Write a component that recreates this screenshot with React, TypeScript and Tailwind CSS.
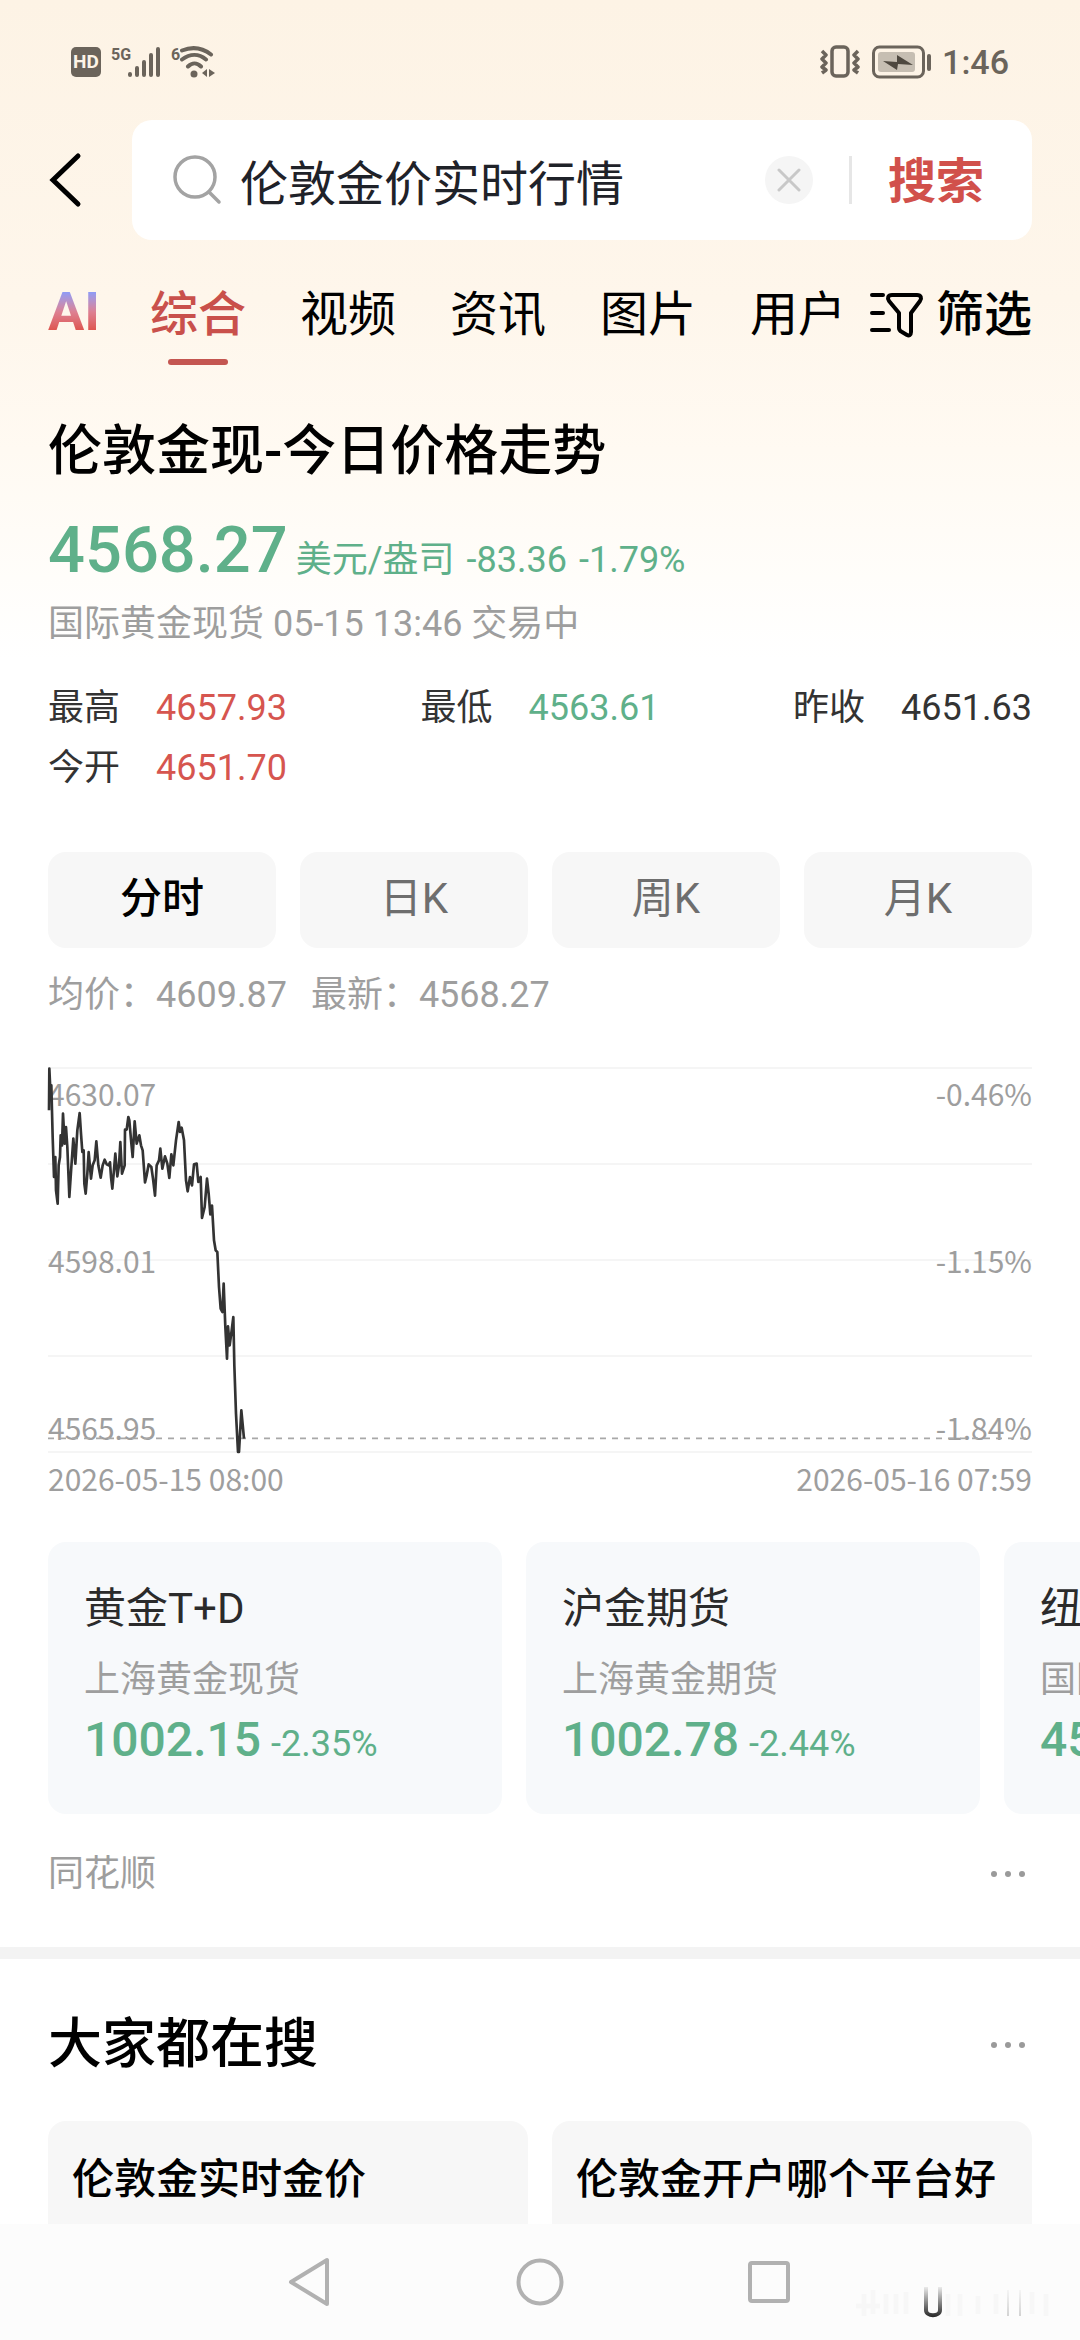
import { useState } from 'react';

const TABS = ['综合', '视频', '资讯', '图片', '用户'];
const PERIODS = ['分时', '日K', '周K', '月K'];

const STATS = [
  { label: '最高', value: '4657.93', color: 'text-[#d6554f]' },
  { label: '最低', value: '4563.61', color: 'text-[#5fb08a]' },
  { label: '昨收', value: '4651.63', color: 'text-[#333333]' },
  { label: '今开', value: '4651.70', color: 'text-[#d6554f]' },
];

const MARKETS = [
  { name: '黄金T+D', source: '上海黄金现货', price: '1002.15', change: '-2.35%' },
  { name: '沪金期货', source: '上海黄金期货', price: '1002.78', change: '-2.44%' },
  { name: '纽约', source: '国际', price: '45', change: '' },
];

const RELATED = ['伦敦金实时金价', '伦敦金开户哪个平台好'];

const CHART_LABELS = [
  ['4630.07', '-0.46%'],
  ['4598.01', '-1.15%'],
  ['4565.95', '-1.84%'],
];

const PRICE_LINE =
  '57,180 58,55 62,140 64,105 68,260 72,380 76,320 78,420 83,460 86,345 90,320 92,255 96,285 99,190 104,280 108,230 112,290 118,440 124,350 130,265 136,340 142,240 149,188 153,250 157,305 161,300 163,400 167,430 172,370 176,305 183,385 188,345 194,330 199,273 205,345 212,382 218,345 224,328 230,342 236,345 240,336 243,380 247,415 251,370 256,310 262,378 267,345 271,275 276,370 284,345 285,238 290,238 295,200 298,210 303,268 308,320 314,213 320,280 328,255 333,285 338,300 345,396 350,375 356,342 364,350 369,385 375,436 380,345 387,330 391,295 397,355 405,318 412,340 418,383 424,312 430,345 438,270 446,215 450,245 455,232 462,270 465,330 468,390 473,423 480,380 486,405 492,342 500,340 505,395 512,380 516,503 524,470 531,385 536,430 541,492 546,466 552,570 557,600 562,605 567,710 572,775 577,785 581,700 586,830 591,925 594,828 599,885 605,840 610,800 613,945 618,1090 624,1205 627,1205 634,1080 642,1165';

function StatusBar() {
  return (
    <div className="flex h-[120px] items-center justify-between px-[71px] pt-[3px] text-[#6b645b]">
      <div className="flex items-center">
        <span className="flex h-[30px] w-[30px] items-center justify-center rounded-[5px] bg-[#6b645b] text-[19px] font-bold leading-none text-[#fdf4e7]">
          HD
        </span>
        <span className="ml-[10px] h-[32px] text-[16px] font-bold leading-[18px]">5G</span>
        <svg className="-ml-[4px]" width="34" height="32" viewBox="0 0 34 32" stroke="currentColor" strokeWidth="4" strokeLinecap="round">
          <path d="M3 28v1M10 22v7M17 16v13M24 9v20M31 3v26" />
        </svg>
        <span className="ml-[10px] h-[32px] text-[16px] font-bold leading-[18px]">6</span>
        <svg width="36" height="32" viewBox="0 0 36 32" fill="none" stroke="currentColor" strokeWidth="4">
          <path d="M2 4.500c10-4 20-3 29 4M2 13.500c8-6 17-6 24 0M8 20.500c4-4 9-4 13 0" strokeLinecap="round" />
          <circle cx="14" cy="28" r="3.500" fill="currentColor" stroke="none" />
          <path d="M27 23v8l-5-4zM29 23v8l6-4z" fill="currentColor" stroke="none" />
        </svg>
      </div>
      <div className="flex items-center">
        <svg width="40" height="34" viewBox="0 0 40 34" fill="none" stroke="currentColor" strokeWidth="3.500" strokeLinejoin="round">
          <rect x="12" y="2" width="16" height="29" rx="4" />
          <path d="M2 6l4 4-4 4 4 4-4 4 4 3-4 3M38 6l-4 4 4 4-4 4 4 4-4 3 4 3" />
        </svg>
        <svg className="ml-[12px]" width="60" height="34" viewBox="0 0 60 34" fill="none">
          <rect x="1.500" y="2" width="50" height="30" rx="6" stroke="currentColor" strokeWidth="3" />
          <rect x="6" y="7" width="37" height="20" rx="3" fill="#c6beb2" />
          <path d="M11 16l14 1v-7l16 10-15-1-1 6z" fill="#4e483f" />
          <rect x="55" y="9" width="4" height="17" rx="2" fill="currentColor" />
        </svg>
        <span className="ml-[10px] text-[34px] font-medium leading-[40px]">1:46</span>
      </div>
    </div>
  );
}

function SearchBar() {
  const [query, setQuery] = useState('伦敦金价实时行情');

  return (
    <div className="flex items-center px-12">
      <button type="button" aria-label="返回" className="w-[84px]">
        <svg width="36" height="56" viewBox="0 0 36 56" fill="none" stroke="#000" strokeWidth="5" strokeLinecap="round" strokeLinejoin="miter">
          <path d="M30 4L5 28l25 24" />
        </svg>
      </button>
      <form
        className="flex h-[120px] min-w-0 flex-1 items-center rounded-[20px] bg-white pl-[40px] pr-12"
        onSubmit={(e) => e.preventDefault()}
      >
        <svg className="shrink-0" width="52" height="52" viewBox="0 0 52 52" fill="none" stroke="#a3a3a3" strokeWidth="3.500">
          <circle cx="23" cy="23" r="20" />
          <path d="M37 38l10 10" strokeLinecap="round" />
        </svg>
        <input
          aria-label="搜索内容"
          value={query}
          onChange={(e) => setQuery(e.target.value)}
          className="ml-4 h-[74px] min-w-0 flex-1 bg-transparent text-[48px] text-[#1f2229] outline-none"
        />
        <button
          type="button"
          aria-label="清空"
          onClick={() => setQuery('')}
          className="flex h-12 w-12 shrink-0 items-center justify-center rounded-full bg-[#f5f5f5]"
        >
          <svg width="24" height="24" viewBox="0 0 24 24" stroke="#c8c8c8" strokeWidth="3" strokeLinecap="round">
            <path d="M2 2l20 20M22 2L2 22" />
          </svg>
        </button>
        <div className="ml-9 h-12 w-[3px] bg-[#e6e6e6]" />
        <button type="submit" className="ml-9 shrink-0 pt-1 text-[48px] font-bold leading-[72px] text-[#d1504b]">
          搜索
        </button>
      </form>
    </div>
  );
}

function TabBar() {
  const [active, setActive] = useState('综合');

  return (
    <nav className="flex items-start justify-between px-12 pt-[39px] text-[48px] leading-[72px] text-black">
      <div className="flex items-start gap-[54px]">
        <button
          type="button"
          className="w-12 bg-linear-to-b from-[#8f9bf5] from-20% via-[#dd8092] via-50% to-[#de5048] to-80% bg-clip-text text-left text-[54px] font-bold leading-[66px] text-transparent"
        >
          AI
        </button>
        {TABS.map((tab) => (
          <button key={tab} type="button" onClick={() => setActive(tab)} className="flex flex-col items-center">
            <span className={tab === active ? 'font-medium text-[#c9504b]' : ''}>{tab}</span>
            {tab === active && <span className="mt-2 h-[6px] w-[60px] rounded-full bg-[#c45651]" />}
          </button>
        ))}
      </div>
      <button type="button" className="flex shrink-0 items-center font-medium">
        <svg className="mr-3" width="56" height="48" viewBox="0 0 56 48" fill="none" stroke="#000" strokeWidth="4" strokeLinecap="round" strokeLinejoin="round">
          <path d="M4 4h11M4 22h11M4 39h17" />
          <path d="M24 4h25c4 0 5 3 3 6L43 22v19c0 3-2 4-4 3l-5-3c-2-1-3-2-3-4V22L21 10c-2-3-1-6 3-6z" />
        </svg>
        筛选
      </button>
    </nav>
  );
}

function PriceChart() {
  return (
    <div className="mt-[45px] font-['Noto_Sans_CJK_SC',sans-serif] text-[30px] leading-[44px] text-[#9e9e9e]">
      <div className="relative">
        <svg className="block h-[386px] w-full" viewBox="54 50 2952 1158" preserveAspectRatio="none" fill="none">
          <path d="M54 53H3006M54 341H3006M54 629H3006M54 917H3006M54 1205H3006" stroke="#f5f5f5" strokeWidth="6" />
        </svg>
        <div className="absolute inset-0 flex flex-col justify-between py-1">
          {CHART_LABELS.map(([price, change]) => (
            <div key={price} className="flex justify-between">
              <span>{price}</span>
              <span>{change}</span>
            </div>
          ))}
        </div>
        <svg className="absolute inset-0 h-full w-full overflow-visible" viewBox="54 50 2952 1158" preserveAspectRatio="none" fill="none">
          <path d="M54 1164H3006" stroke="#a8a8a8" strokeWidth="5" strokeDasharray="18 18" />
          <polyline points={PRICE_LINE} stroke="#333333" strokeWidth="8" strokeLinejoin="round" />
        </svg>
      </div>
      <div className="mt-[3px] flex justify-between">
        <span>2026-05-15 08:00</span>
        <span>2026-05-16 07:59</span>
      </div>
    </div>
  );
}

function MoreButton() {
  return (
    <button type="button" aria-label="更多" className="px-1">
      <svg width="40" height="12" viewBox="0 0 40 12" fill="#9a9a9a">
        <circle cx="6" cy="6" r="3" />
        <circle cx="20" cy="6" r="3" />
        <circle cx="34" cy="6" r="3" />
      </svg>
    </button>
  );
}

function QuoteCard() {
  const [period, setPeriod] = useState('分时');

  return (
    <section className="px-12">
      <h1 className="mt-[51px] text-[54px] font-medium leading-[72px] text-black">伦敦金现-今日价格走势</h1>
      <div className="mt-[22px] flex items-baseline gap-3 text-[36px] text-[#5fb08a]">
        <span className="-mr-1 text-[65px] font-medium leading-[80px]">4568.27</span>
        <span>美元/盎司</span>
        <span>-83.36</span>
        <span>-1.79%</span>
      </div>
      <p className="mt-[7px] text-[36px] leading-[54px] text-[#9e9e9e]">国际黄金现货 05-15 13:46 交易中</p>

      <dl className="mt-[27px] grid grid-cols-[auto_auto_auto] justify-between text-[36px] leading-[60px]">
        {STATS.map((s) => (
          <div key={s.label} className="flex gap-9">
            <dt className="text-[#333333]">{s.label}</dt>
            <dd className={s.color}>{s.value}</dd>
          </div>
        ))}
      </dl>

      <div className="mt-[54px] grid grid-cols-4 gap-6">
        {PERIODS.map((p) => (
          <button
            key={p}
            type="button"
            onClick={() => setPeriod(p)}
            className={`h-24 rounded-[18px] bg-[#f7f7f7] pb-1 text-[42px] ${p === period ? 'font-medium text-black' : 'text-[#6e6e6e]'}`}
          >
            {p}
          </button>
        ))}
      </div>

      <p className="mt-5 flex gap-6 text-[36px] leading-[54px] text-[#9e9e9e]">
        <span>均价：4609.87</span>
        <span>最新：4568.27</span>
      </p>

      <PriceChart />

      <div className="-mr-12 mt-[42px] flex gap-6 overflow-hidden">
        {MARKETS.map((m) => (
          <a key={m.name} href="#" className="block h-[272px] w-[454px] shrink-0 rounded-[18px] bg-[#f7f9fb] px-9 pt-[37px]">
            <div className="text-[42px] leading-[60px] text-[#2b2b2b]">{m.name}</div>
            <div className="mt-[14px] text-[36px] leading-[54px] text-[#9e9e9e]">{m.source}</div>
            <div className="mt-[3px] flex items-baseline gap-[10px] text-[#5fb08a]">
              <span className="text-[48px] font-medium leading-[60px]">{m.price}</span>
              <span className="text-[36px]">{m.change}</span>
            </div>
          </a>
        ))}
      </div>

      <div className="mt-[33px] flex items-center justify-between text-[36px] leading-[54px] text-[#9e9e9e]">
        <span>同花顺</span>
        <MoreButton />
      </div>
    </section>
  );
}

function RelatedSearches() {
  return (
    <section className="mt-[46px] border-t-12 border-[#f3f3f3] px-12">
      <div className="mt-[50px] flex items-center justify-between">
        <h2 className="text-[54px] font-medium leading-[72px] text-black">大家都在搜</h2>
        <MoreButton />
      </div>
      <div className="mt-10 grid grid-cols-2 gap-6">
        {RELATED.map((r) => (
          <a key={r} href="#" className="block h-[124px] rounded-[18px] bg-[#f7f7f7] px-6 pt-8 text-[42px] font-medium leading-[54px] text-black">
            {r}
          </a>
        ))}
      </div>
    </section>
  );
}

function SystemNav() {
  return (
    <div className="relative grid h-[116px] shrink-0 grid-cols-[1fr_auto_1fr] items-center gap-[181px] bg-[#fcfcfc]">
      <button type="button" aria-label="后退" className="justify-self-end">
        <svg width="48" height="52" viewBox="0 0 48 52" fill="none" stroke="#b1b1b1" strokeWidth="4" strokeLinejoin="round">
          <path d="M42 4v44L6 26z" />
        </svg>
      </button>
      <button type="button" aria-label="主屏幕">
        <svg width="52" height="52" viewBox="0 0 52 52" fill="none" stroke="#b1b1b1" strokeWidth="4">
          <circle cx="26" cy="26" r="21.500" />
        </svg>
      </button>
      <button type="button" aria-label="最近任务" className="justify-self-start">
        <svg width="44" height="44" viewBox="0 0 44 44" fill="none" stroke="#b1b1b1" strokeWidth="4">
          <rect x="3" y="3" width="38" height="38" rx="2" />
        </svg>
      </button>
      <svg className="absolute right-6 bottom-5" width="200" height="34" viewBox="0 0 200 34" fill="none">
        <defs>
          <linearGradient id="smudge" x1="0" y1="0" x2="0" y2="32" gradientUnits="userSpaceOnUse">
            <stop offset="0" stopColor="#222" stopOpacity="0.05" />
            <stop offset="1" stopColor="#222" />
          </linearGradient>
        </defs>
        <path d="M0 20h24M8 8v22M17 4v24M30 8v20M40 8v20M50 6v22M92 8v22M104 8v22M122 10v18M140 8v20M176 6v22M190 8v22" stroke="#000" strokeOpacity="0.02" strokeWidth="5" />
        <path d="M70 1v23c0 7 14 7 14 0V1" stroke="url(#smudge)" strokeWidth="4" />
        <path d="M152 4v26M164 4v26" stroke="url(#smudge)" strokeOpacity="0.2" strokeWidth="2" />
      </svg>
    </div>
  );
}

export default function App() {
  return (
    <div className="flex h-screen flex-col bg-white font-[Roboto,'Noto_Sans_CJK_SC',sans-serif]">
      <main className="min-h-0 flex-1 overflow-hidden bg-[linear-gradient(to_bottom,#fdf3e5_0,#fef6eb_300px,#fffaf2_450px,#ffffff_660px)]">
        <StatusBar />
        <SearchBar />
        <TabBar />
        <QuoteCard />
        <RelatedSearches />
      </main>
      <SystemNav />
    </div>
  );
}
